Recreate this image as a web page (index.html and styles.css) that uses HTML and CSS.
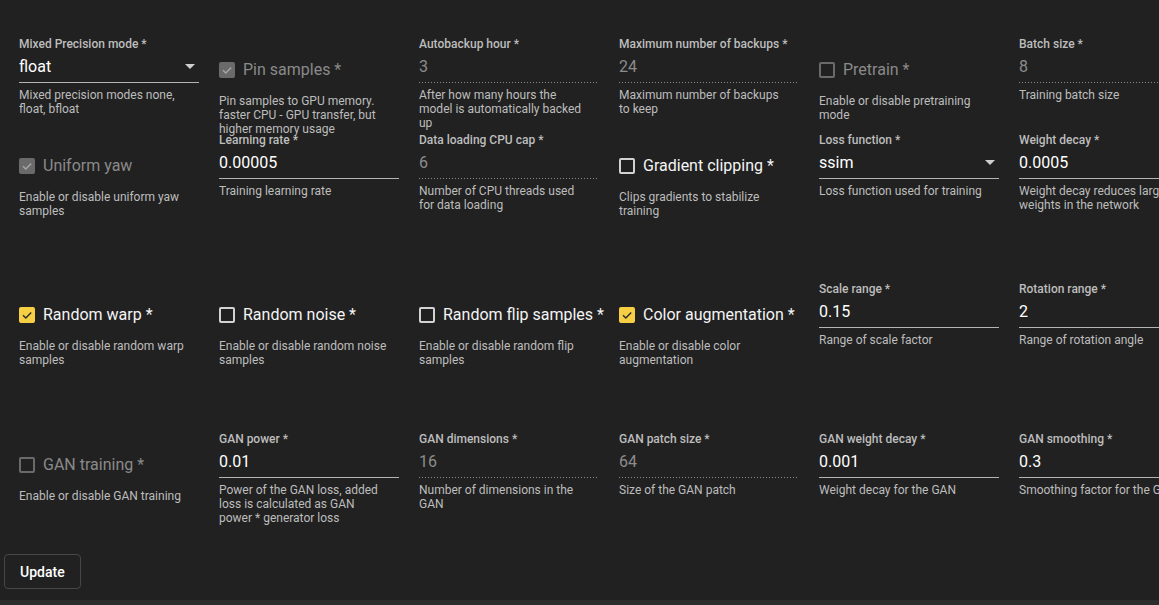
FILE: index.html
```html
<!DOCTYPE html>
<html lang="en">
<head>
<meta charset="utf-8">
<title>Training settings</title>
<link rel="stylesheet" href="styles.css">
</head>
<body>
<div class="app">
  <main class="content">
    <div class="grid">
      <!-- Row 1 -->
      <div class="field">
        <div class="label">Mixed Precision mode *</div>
        <div class="control"><span class="value">float</span><span class="arrow"></span></div>
        <div class="hint">Mixed precision modes none, float, bfloat</div>
      </div>
      <div class="check is-disabled is-checked">
        <div class="check-row"><span class="box"><svg viewBox="0 0 16 16"><path d="M4 8.2 L6.8 11 L12.2 5.4"/></svg></span><span class="check-label">Pin samples *</span></div>
        <div class="hint">Pin samples to GPU memory. faster CPU - GPU transfer, but higher memory usage</div>
      </div>
      <div class="field is-disabled">
        <div class="label">Autobackup hour *</div>
        <div class="control"><span class="value">3</span></div>
        <div class="hint">After how many hours the model is automatically backed up</div>
      </div>
      <div class="field is-disabled">
        <div class="label">Maximum number of backups *</div>
        <div class="control"><span class="value">24</span></div>
        <div class="hint">Maximum number of backups to keep</div>
      </div>
      <div class="check is-disabled">
        <div class="check-row"><span class="box"></span><span class="check-label">Pretrain *</span></div>
        <div class="hint">Enable or disable pretraining mode</div>
      </div>
      <div class="field is-disabled">
        <div class="label">Batch size *</div>
        <div class="control"><span class="value">8</span></div>
        <div class="hint">Training batch size</div>
      </div>

      <!-- Row 2 -->
      <div class="check is-disabled is-checked">
        <div class="check-row"><span class="box"><svg viewBox="0 0 16 16"><path d="M4 8.2 L6.8 11 L12.2 5.4"/></svg></span><span class="check-label">Uniform yaw</span></div>
        <div class="hint">Enable or disable uniform yaw samples</div>
      </div>
      <div class="field">
        <div class="label">Learning rate *</div>
        <div class="control"><span class="value">0.00005</span></div>
        <div class="hint">Training learning rate</div>
      </div>
      <div class="field is-disabled">
        <div class="label">Data loading CPU cap *</div>
        <div class="control"><span class="value">6</span></div>
        <div class="hint">Number of CPU threads used for data loading</div>
      </div>
      <div class="check">
        <div class="check-row"><span class="box"></span><span class="check-label">Gradient clipping *</span></div>
        <div class="hint">Clips gradients to stabilize training</div>
      </div>
      <div class="field">
        <div class="label">Loss function *</div>
        <div class="control"><span class="value">ssim</span><span class="arrow"></span></div>
        <div class="hint">Loss function used for training</div>
      </div>
      <div class="field">
        <div class="label">Weight decay *</div>
        <div class="control"><span class="value">0.0005</span></div>
        <div class="hint">Weight decay reduces large weights in the network</div>
      </div>

      <!-- Row 3 -->
      <div class="check is-checked">
        <div class="check-row"><span class="box"><svg viewBox="0 0 16 16"><path d="M4 8.2 L6.8 11 L12.2 5.4"/></svg></span><span class="check-label">Random warp *</span></div>
        <div class="hint">Enable or disable random warp samples</div>
      </div>
      <div class="check">
        <div class="check-row"><span class="box"></span><span class="check-label">Random noise *</span></div>
        <div class="hint">Enable or disable random noise samples</div>
      </div>
      <div class="check">
        <div class="check-row"><span class="box"></span><span class="check-label">Random flip samples *</span></div>
        <div class="hint">Enable or disable random flip samples</div>
      </div>
      <div class="check is-checked">
        <div class="check-row"><span class="box"><svg viewBox="0 0 16 16"><path d="M4 8.2 L6.8 11 L12.2 5.4"/></svg></span><span class="check-label">Color augmentation *</span></div>
        <div class="hint">Enable or disable color augmentation</div>
      </div>
      <div class="field">
        <div class="label">Scale range *</div>
        <div class="control"><span class="value">0.15</span></div>
        <div class="hint">Range of scale factor</div>
      </div>
      <div class="field">
        <div class="label">Rotation range *</div>
        <div class="control"><span class="value">2</span></div>
        <div class="hint">Range of rotation angle</div>
      </div>

      <!-- Row 4 -->
      <div class="check is-disabled">
        <div class="check-row"><span class="box"></span><span class="check-label">GAN training *</span></div>
        <div class="hint">Enable or disable GAN training</div>
      </div>
      <div class="field">
        <div class="label">GAN power *</div>
        <div class="control"><span class="value">0.01</span></div>
        <div class="hint">Power of the GAN loss, added loss is calculated as GAN power * generator loss</div>
      </div>
      <div class="field is-disabled">
        <div class="label">GAN dimensions *</div>
        <div class="control"><span class="value">16</span></div>
        <div class="hint">Number of dimensions in the GAN</div>
      </div>
      <div class="field is-disabled">
        <div class="label">GAN patch size *</div>
        <div class="control"><span class="value">64</span></div>
        <div class="hint">Size of the GAN patch</div>
      </div>
      <div class="field">
        <div class="label">GAN weight decay *</div>
        <div class="control"><span class="value">0.001</span></div>
        <div class="hint">Weight decay for the GAN</div>
      </div>
      <div class="field">
        <div class="label">GAN smoothing *</div>
        <div class="control"><span class="value">0.3</span></div>
        <div class="hint">Smoothing factor for the GAN</div>
      </div>
    </div>

    <div class="actions">
      <button class="btn" type="button">Update</button>
    </div>
  </main>
  <div class="statusbar"></div>
</div>
</body>
</html>
```

FILE: styles.css
```css
* {
  box-sizing: border-box;
}

html, body {
  margin: 0;
  padding: 0;
  height: 100%;
  background: #212121;
  overflow: hidden;
}

body {
  font-family: "Roboto", "Liberation Sans", sans-serif;
  color: #f2f2f2;
}

.app {
  height: 100vh;
  display: flex;
  flex-direction: column;
}

.content {
  flex: 1;
  overflow: hidden;
  padding: 37px 0 0 4px;
}

.grid {
  display: grid;
  grid-template-columns: repeat(6, 180px);
  grid-template-rows: 96px 149px 150px auto;
  column-gap: 20px;
  padding-left: 15px;
  width: max-content;
}

/* ---------- text / select fields ---------- */
.field {
  display: flex;
  flex-direction: column;
  min-width: 0;
}

.field > *,
.check > * {
  flex: none;
}

.label {
  font-size: 12px;
  line-height: 14px;
  font-weight: 500;
  color: #bdbdbd;
  white-space: nowrap;
}

.control {
  height: 32px;
  display: flex;
  align-items: center;
  justify-content: space-between;
  padding-bottom: 1px;
  background-image: linear-gradient(#b4b4b4, #b4b4b4);
  background-repeat: repeat-x;
  background-position: left bottom;
  background-size: 100% 1px;
}

.value {
  font-size: 16px;
  line-height: 20px;
  color: #ffffff;
}

.arrow {
  width: 0;
  height: 0;
  margin-right: 4px;
  border-left: 5px solid transparent;
  border-right: 5px solid transparent;
  border-top: 5px solid #cfcfcf;
}

.field.is-disabled .value {
  color: #8c8c8c;
}

.field.is-disabled .control {
  background-image: linear-gradient(to right, #8a8a8a 1px, transparent 1px);
  background-size: 3px 1px;
}

.hint {
  font-size: 12px;
  line-height: 14px;
  color: #bdbdbd;
  padding-right: 10px;
}

.field .hint {
  padding-top: 5px;
}

/* ---------- checkboxes ---------- */
.check {
  display: flex;
  flex-direction: column;
  padding-top: 19px;
  min-width: 0;
}

.check-row {
  height: 27px;
  display: flex;
  align-items: center;
  gap: 8px;
  white-space: nowrap;
}

.box {
  width: 16px;
  height: 16px;
  flex: none;
  border: 2px solid #d2d2d2;
  border-radius: 2px;
  display: flex;
  align-items: center;
  justify-content: center;
}

.box svg {
  width: 16px;
  height: 16px;
  flex: none;
}

.box path {
  fill: none;
  stroke: #2a2a2a;
  stroke-width: 1.4;
}

.check-label {
  font-size: 16px;
  line-height: 20px;
  color: #f4f4f4;
}

.check.is-checked .box {
  background: #f7cf45;
  border-color: #f7cf45;
}

.check.is-disabled .box {
  border-color: #6a6a6a;
}

.check.is-disabled .check-label {
  color: #8a8a8a;
}

.check.is-disabled.is-checked .box {
  background: #6a6a6a;
  border-color: #6a6a6a;
}

.check.is-disabled.is-checked .box path {
  stroke: #a6a6a6;
}

.check .hint {
  margin-top: 11px;
}

/* ---------- actions ---------- */
.actions {
  padding-top: 29px;
}

.btn {
  height: 35px;
  padding: 0 15px;
  background: transparent;
  border: 1px solid #474747;
  border-radius: 4px;
  color: #ffffff;
  font-family: "Roboto", "Liberation Sans", sans-serif;
  font-size: 14px;
  font-weight: 500;
}

.statusbar {
  height: 5px;
  background: #2c2c2c;
  flex: none;
}
```
